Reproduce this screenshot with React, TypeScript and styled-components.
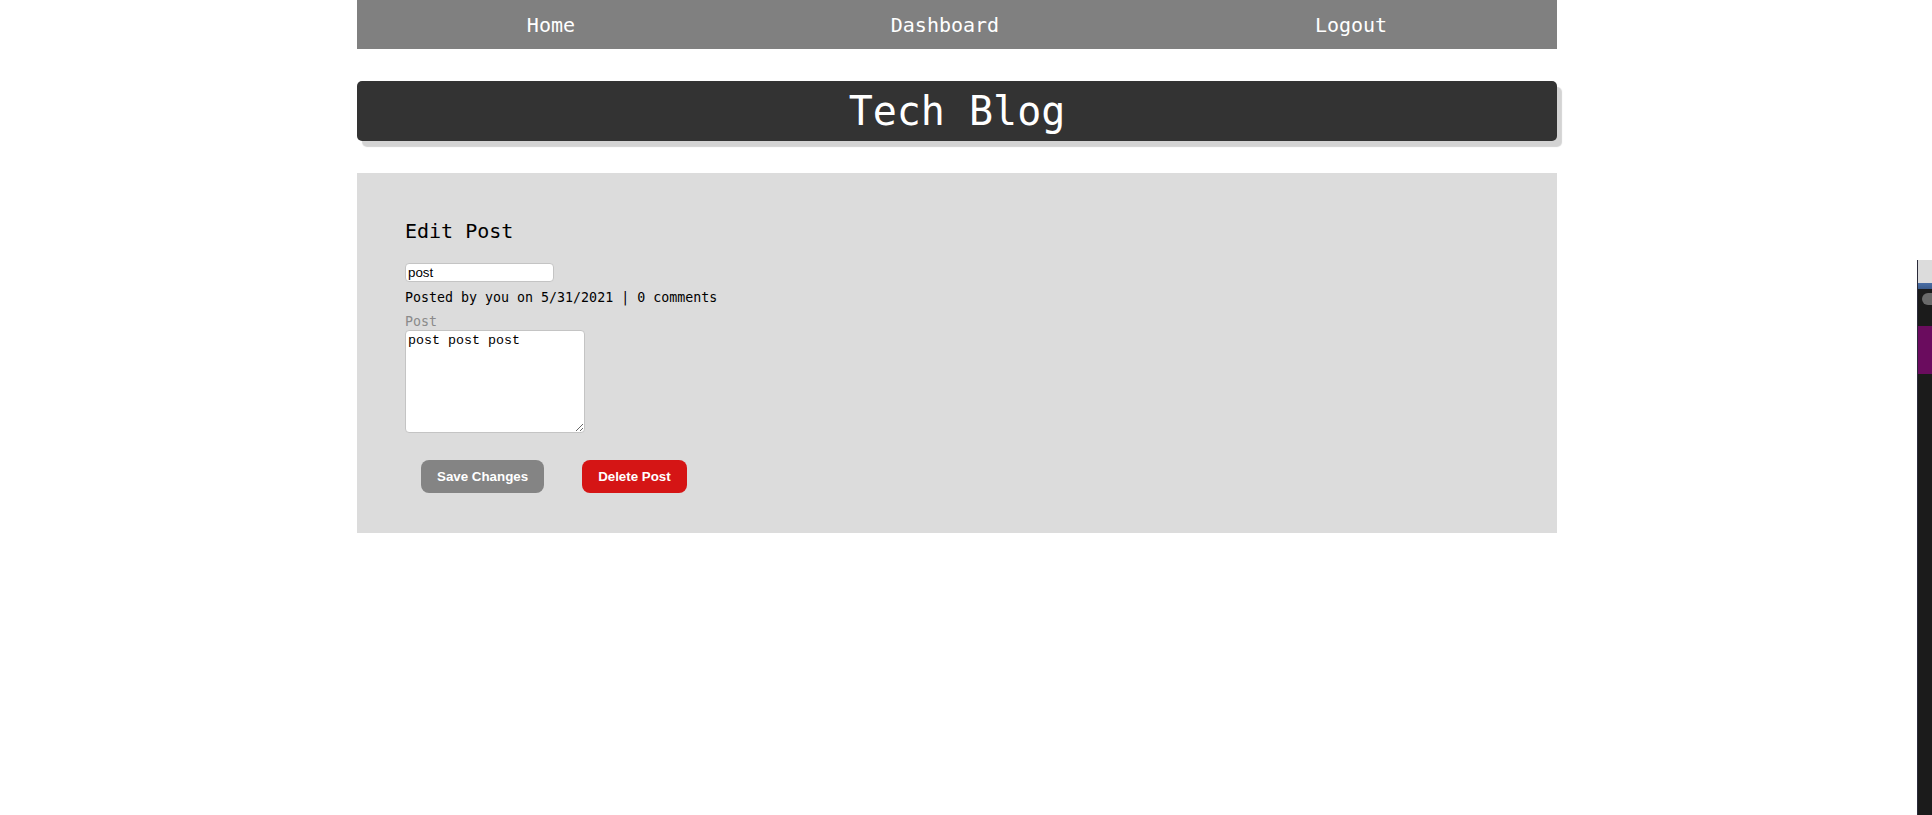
import React from "react";
import styled, { createGlobalStyle } from "styled-components";

const GlobalStyle = createGlobalStyle`
  html, body {
    margin: 0;
    padding: 0;
    background: #ffffff;
  }
  body {
    font-family: "DejaVu Sans Mono", "Liberation Mono", monospace;
    color: #000;
  }
`;

const Page = styled.div`
  display: grid;
  grid-template-columns: 1fr 18px;
  min-height: 815px;
`;

const Main = styled.div`
  display: flex;
  flex-direction: column;
  align-items: center;
`;

const Column = styled.div`
  width: 1200px;
  display: flex;
  flex-direction: column;
`;

const Nav = styled.nav`
  height: 49px;
  padding: 0 12px;
  background: #808080;
  display: flex;
  justify-content: space-around;
  align-items: center;
`;

const NavLink = styled.a`
  color: #ffffff;
  text-decoration: none;
  font-family: "DejaVu Sans Mono", monospace;
  font-size: 20px;
  line-height: 24px;
`;

const Header = styled.header`
  margin-top: 32px;
  height: 60px;
  background: #333333;
  border-radius: 5px;
  box-shadow: 5px 6px 1px #d3d3d3;
  display: flex;
  align-items: center;
  justify-content: center;
`;

const Title = styled.h1`
  margin: 0;
  color: #ffffff;
  font-family: "DejaVu Sans Mono", monospace;
  font-weight: normal;
  font-size: 40px;
  line-height: 48px;
`;

const Card = styled.section`
  margin-top: 32px;
  background: #dcdcdc;
  padding: 46px 48px 40px;
  display: flex;
  flex-direction: column;
  align-items: flex-start;
`;

const Heading = styled.h2`
  margin: 0;
  font-family: "DejaVu Sans Mono", monospace;
  font-weight: normal;
  font-size: 20px;
  line-height: 24px;
`;

const TitleInput = styled.input`
  margin-top: 20px;
  width: 149px;
  height: 19px;
  box-sizing: border-box;
  border: 1px solid #c4c4c4;
  border-radius: 4px;
  background: #fff;
  padding: 0 2px;
  font-family: "Liberation Sans", Arial, sans-serif;
  font-size: 13.33px;
  color: #000;
  outline: none;
`;

const Meta = styled.div`
  margin-top: 8px;
  font-size: 13.3px;
  line-height: 16px;
`;

const Label = styled.label`
  margin-top: 8px;
  font-size: 13.3px;
  line-height: 16px;
  color: #8a8a8a;
`;

const Body = styled.textarea`
  width: 180px;
  height: 103px;
  box-sizing: border-box;
  border: 1px solid #c4c4c4;
  border-radius: 4px;
  background: #fff;
  padding: 2px;
  font-family: "Liberation Mono", "Courier New", monospace;
  font-size: 13.33px;
  line-height: 15px;
  color: #000;
  resize: both;
  outline: none;
`;

const Actions = styled.div`
  margin-top: 27px;
  margin-left: 16px;
  display: flex;
  gap: 38px;
`;

const Button = styled.button<{ $tone: "neutral" | "danger" }>`
  height: 33px;
  padding: 0 16px;
  border: none;
  border-radius: 8px;
  background: ${(p) => (p.$tone === "danger" ? "#d51515" : "#848484")};
  color: #fff;
  font-family: "Liberation Sans", Arial, sans-serif;
  font-weight: bold;
  font-size: 13.33px;
  cursor: pointer;
`;

const Side = styled.aside`
  padding-top: 260px;
  padding-left: 3px;
  display: flex;
`;

const Window = styled.div`
  flex: 1;
  display: flex;
  flex-direction: column;
  background: #1b1b1b;
  border-left: 1px solid #2a2a3a;
`;

const WinTitle = styled.div`
  height: 23px;
  background: #dcdcdc;
`;

const WinBar = styled.div`
  height: 6px;
  background: linear-gradient(180deg, #4a6ea6, #3a5a8a);
`;

const WinTop = styled.div`
  height: 37px;
  position: relative;
  background: #1b1b1b;
`;

const Knob = styled.span`
  position: absolute;
  left: 4px;
  top: 4px;
  width: 14px;
  height: 12px;
  border-radius: 7px 0 0 7px;
  background: #6a6a6a;
`;

const WinBand = styled.div`
  height: 48px;
  background: #6a0c5e;
`;

export default function App() {
  return (
    <>
      <GlobalStyle />
      <Page>
        <Main>
          <Column>
            <Nav>
              <NavLink href="#">Home</NavLink>
              <NavLink href="#">Dashboard</NavLink>
              <NavLink href="#">Logout</NavLink>
            </Nav>
            <Header>
              <Title>Tech Blog</Title>
            </Header>
            <Card>
              <Heading>Edit Post</Heading>
              <TitleInput defaultValue="post" />
              <Meta>Posted by you on 5/31/2021 | 0 comments</Meta>
              <Label htmlFor="post-body">Post</Label>
              <Body id="post-body" defaultValue="post post post" />
              <Actions>
                <Button $tone="neutral">Save Changes</Button>
                <Button $tone="danger">Delete Post</Button>
              </Actions>
            </Card>
          </Column>
        </Main>
        <Side>
          <Window>
            <WinTitle />
            <WinBar />
            <WinTop>
              <Knob />
            </WinTop>
            <WinBand />
          </Window>
        </Side>
      </Page>
    </>
  );
}
